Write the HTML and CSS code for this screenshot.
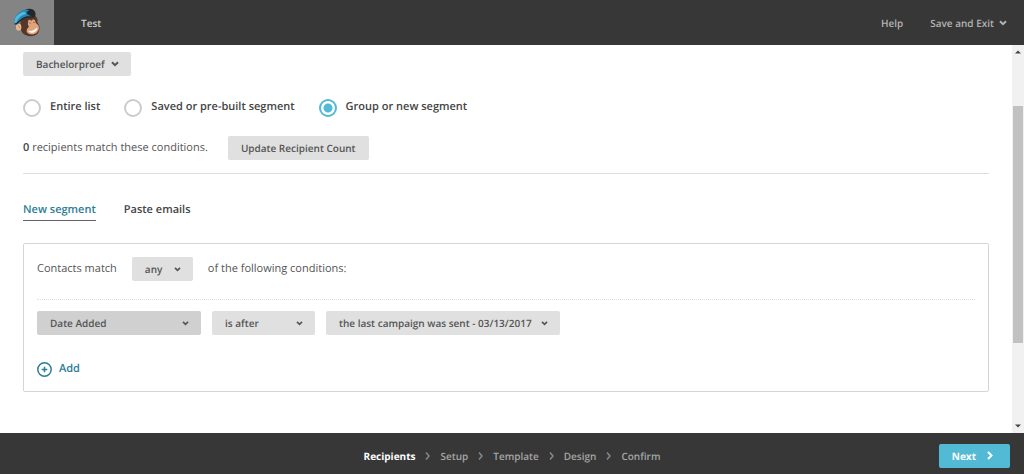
FILE: index.html
```html
<!DOCTYPE html>
<html lang="en">
<head>
<meta charset="utf-8">
<title>Test - Recipients</title>
<link rel="stylesheet" href="styles.css">
</head>
<body>
<header class="topbar">
  <a class="logo" href="#" aria-label="Home">
    <svg viewBox="36 24 90 92" width="30" height="31" aria-hidden="true">
      <path d="M62 66C59 80 62 96 70 104C82 114 103 114 113 103C121 92 120 78 112 69C115 57 109 49 98 48C84 48 68 54 62 66Z" fill="#54362b"/>
      <path d="M84 70C83 62 89 59 94 65C99 58 107 61 106 68C107 72 111 74 115 78C119 87 116 97 107 103C98 108 86 106 81 100C78 94 81 88 87 83C84 79 83 75 84 70Z" fill="#dfa37b"/>
      <ellipse cx="56" cy="84" rx="8" ry="10" fill="#eab893"/>
      <path d="M54 80C58 78 59 83 57 88" fill="none" stroke="#a86b50" stroke-width="2"/>
      <path d="M84 94C92 98 103 92 112 85C113 93 107 98 99 101C93 103 87 100 84 94Z" fill="#fff4e8"/>
      <path d="M88 72Q90 69 92 72M100 70Q102 67 104 70" fill="none" stroke="#54362b" stroke-width="2"/>
      <path d="M44 74C39 56 54 36 76 31C86 28 100 30 103 38L97 52C80 50 64 58 53 76Z" fill="#2387b4"/>
      <path d="M44 71C42 55 54 42 73 37L79 44C62 49 52 59 49 73Z" fill="#55b8dc"/>
      <path d="M76 32C86 26 101 28 105 38C109 46 106 54 99 55C94 50 87 48 82 45C78 41 80 36 88 34C84 32 80 32 76 32Z" fill="#24272a"/>
      <path d="M44 75C54 75 59 59 80 53L98 54" fill="none" stroke="#24272a" stroke-width="4"/>
    </svg>
  </a>
  <h1 class="campaign">Test</h1>
  <nav class="actions" aria-label="Account">
    <a href="#">Help</a>
    <button class="save" type="button">Save and Exit
      <svg class="chev" viewBox="0 0 8 6" width="8" height="6" aria-hidden="true"><path d="M1 1.2L4 4.2L7 1.2"/></svg>
    </button>
  </nav>
</header>

<div class="viewport">
  <main class="content">
    <div class="picker">
      <select class="btn compact" aria-label="List"><option>Bachelorproef</option></select>
      <svg class="chev" viewBox="0 0 8 6" width="8" height="6" aria-hidden="true"><path d="M1 1.2L4 4.2L7 1.2"/></svg>
    </div>

    <div class="radios" role="radiogroup" aria-label="Recipients">
      <label class="choice"><input type="radio" name="scope"><span>Entire list</span></label>
      <label class="choice"><input type="radio" name="scope"><span>Saved or pre-built segment</span></label>
      <label class="choice"><input type="radio" name="scope" checked><span>Group or new segment</span></label>
    </div>

    <div class="count">
      <p><b>0</b> recipients match these conditions.</p>
      <button class="btn" type="button">Update Recipient Count</button>
    </div>

    <nav class="tabs" aria-label="Segment source">
      <a class="tab current" href="#">New segment</a>
      <a class="tab" href="#">Paste emails</a>
    </nav>

    <section class="segment">
      <div class="match">
        <label for="match">Contacts match</label>
        <div class="picker">
          <select class="btn roomy" id="match"><option>any</option></select>
          <svg class="chev" viewBox="0 0 8 6" width="7" height="5" aria-hidden="true"><path d="M1 1L4 4L7 1"/></svg>
        </div>
        <span>of the following conditions:</span>
      </div>
      <div class="condition">
        <div class="picker field">
          <select class="btn dark" aria-label="Field"><option>Date Added</option></select>
          <svg class="chev" viewBox="0 0 8 6" width="7" height="5" aria-hidden="true"><path d="M1 1L4 4L7 1"/></svg>
        </div>
        <div class="picker operator">
          <select class="btn" aria-label="Operator"><option>is after</option></select>
          <svg class="chev" viewBox="0 0 8 6" width="7" height="5" aria-hidden="true"><path d="M1 1L4 4L7 1"/></svg>
        </div>
        <div class="picker">
          <select class="btn" aria-label="Value"><option>the last campaign was sent - 03/13/2017</option></select>
          <svg class="chev" viewBox="0 0 8 6" width="7" height="5" aria-hidden="true"><path d="M1 1L4 4L7 1"/></svg>
        </div>
      </div>
      <button class="add" type="button">
        <svg viewBox="0 0 15 15" width="15" height="15" aria-hidden="true"><circle cx="7.5" cy="7.5" r="6.7"/><path d="M4.7 7.5H10.3M7.5 4.7V10.3"/></svg>
        Add
      </button>
    </section>
  </main>
  <div class="scrollbar" aria-hidden="true">
    <svg viewBox="0 0 6 4" width="6" height="4"><path d="M0 3.5L3 .5L6 3.5Z"/></svg>
    <div class="track"><div class="thumb"></div></div>
    <svg viewBox="0 0 6 4" width="6" height="4"><path d="M0 .5L3 3.5L6 .5Z"/></svg>
  </div>
</div>

<footer class="bottombar">
  <nav class="steps" aria-label="Steps">
    <a class="active" href="#">Recipients</a>
    <svg viewBox="0 0 5 8" width="5" height="8" aria-hidden="true"><path d="M1 .5L4 4L1 7.5"/></svg>
    <a href="#">Setup</a>
    <svg viewBox="0 0 5 8" width="5" height="8" aria-hidden="true"><path d="M1 .5L4 4L1 7.5"/></svg>
    <a href="#">Template</a>
    <svg viewBox="0 0 5 8" width="5" height="8" aria-hidden="true"><path d="M1 .5L4 4L1 7.5"/></svg>
    <a href="#">Design</a>
    <svg viewBox="0 0 5 8" width="5" height="8" aria-hidden="true"><path d="M1 .5L4 4L1 7.5"/></svg>
    <a href="#">Confirm</a>
  </nav>
  <button class="next" type="button">Next
    <svg viewBox="0 0 6 9" width="6" height="9" aria-hidden="true"><path d="M1 1L4.5 4.5L1 8"/></svg>
  </button>
</footer>
</body>
</html>
```

FILE: styles.css
```css
* { box-sizing: border-box; }

body {
  margin: 0;
  min-height: 100vh;
  display: flex;
  flex-direction: column;
  background: #fff;
  color: #555;
  font: 11px/18px "Open Sans", sans-serif;
  text-rendering: geometricPrecision;
}

a { color: inherit; text-decoration: none; }

button, select, input { font: inherit; color: inherit; margin: 0; text-rendering: inherit; }

button { border: 0; padding: 0; background: none; cursor: pointer; }

svg { flex: none; fill: none; }

/* Top bar */
.topbar {
  display: flex;
  align-items: stretch;
  min-height: 45px;
  background: #373737;
  color: #b3b3b3;
  font-size: 10px;
  font-weight: 600;
}

.logo {
  display: flex;
  align-items: center;
  justify-content: center;
  width: 54px;
  background: #848484;
}

.campaign {
  margin: 0 auto 0 27px;
  align-self: center;
  font-size: 10px;
  font-weight: 600;
  color: #ccc;
}

.actions { display: flex; align-items: center; gap: 27px; padding-right: 17px; }

.save { display: flex; align-items: center; gap: 5px; }

.chev { stroke: currentColor; stroke-width: 2; }

/* Scrolling area */
.viewport { flex: 1; display: flex; }

.content { flex: 1; min-width: 0; padding: 7px 23px 41px; }

.btn {
  height: 24px;
  padding: 0 13px;
  border: 0;
  border-radius: 2px;
  background: #e0e0e0;
  color: #555;
  font-size: 10px;
  font-weight: 600;
}

.picker { display: inline-grid; align-items: center; }

.picker > * { grid-area: 1 / 1; }

.picker .btn { width: 100%; appearance: none; padding-right: 28px; }

.picker .compact { padding-right: 26px; }

.picker .roomy { padding-right: 30px; }

.picker .dark { background: #d0d0d0; }

.picker .chev { justify-self: end; margin-right: 12px; pointer-events: none; }

.radios {
  display: flex;
  flex-wrap: wrap;
  gap: 24px;
  margin-top: 23px;
  color: #444;
  font-weight: 600;
}

.choice { display: flex; gap: 9px; }

.choice input {
  appearance: none;
  width: 18px;
  height: 18px;
  border: 2px solid #ccc;
  border-radius: 50%;
  background: #fff;
}

.choice input:checked {
  border-color: #52bad5;
  background: radial-gradient(circle, #52bad5 4px, #fff 5px);
}

.choice span { line-height: 16px; }

.count {
  display: flex;
  align-items: center;
  gap: 20px;
  padding: 19px 0 13px;
  border-bottom: 1px solid #ddd;
}

.count p { margin: 0; }

.count b { font-weight: 600; color: #444; }

.tabs { display: flex; gap: 28px; margin-top: 27px; color: #444; font-weight: 600; }

.tab { padding-bottom: 1px; border-bottom: 1px solid transparent; }

.tab.current { color: #2c7d96; border-color: #66606c; }

.segment {
  margin-top: 22px;
  padding: 13px;
  border: 1px solid #d5d5d5;
  border-radius: 2px;
}

.match {
  display: flex;
  align-items: center;
  gap: 15px;
  padding-bottom: 18px;
  border-bottom: 1px dotted #ddd;
}

.condition { display: flex; flex-wrap: wrap; gap: 11px; margin-top: 11px; }

.field { width: 164px; }

.operator { width: 103px; }

.add {
  display: flex;
  align-items: center;
  gap: 7px;
  margin-top: 25px;
  color: #2c7d96;
  font-weight: 600;
}

.add svg { stroke: currentColor; stroke-width: 1.5; }

.scrollbar {
  display: flex;
  flex-direction: column;
  align-items: center;
  gap: 8px;
  width: 12px;
  padding: 5px 0;
  background: #f1f1f1;
}

.scrollbar svg { fill: #444; }

.track { flex: 1; width: 10px; }

.thumb { height: 67%; margin-top: 44px; background: #c1c1c1; }

/* Bottom bar */
.bottombar {
  display: grid;
  grid-template-columns: 1fr auto 1fr;
  align-items: center;
  min-height: 41px;
  padding: 4px 14px 0;
  background: #373737;
  font-size: 10px;
  font-weight: 600;
}

.steps { grid-column: 2; display: flex; align-items: center; gap: 10px; color: #a5a5a5; }

.steps svg { stroke: #888; stroke-width: 1.5; }

.steps .active { color: #fff; font-weight: 700; }

.next {
  justify-self: end;
  display: flex;
  align-items: center;
  gap: 11px;
  height: 24px;
  padding: 0 17px 0 13px;
  border-radius: 2px;
  background: #52bad5;
  color: #fff;
  font-weight: 700;
}

.next svg { stroke: currentColor; stroke-width: 2; }
```
